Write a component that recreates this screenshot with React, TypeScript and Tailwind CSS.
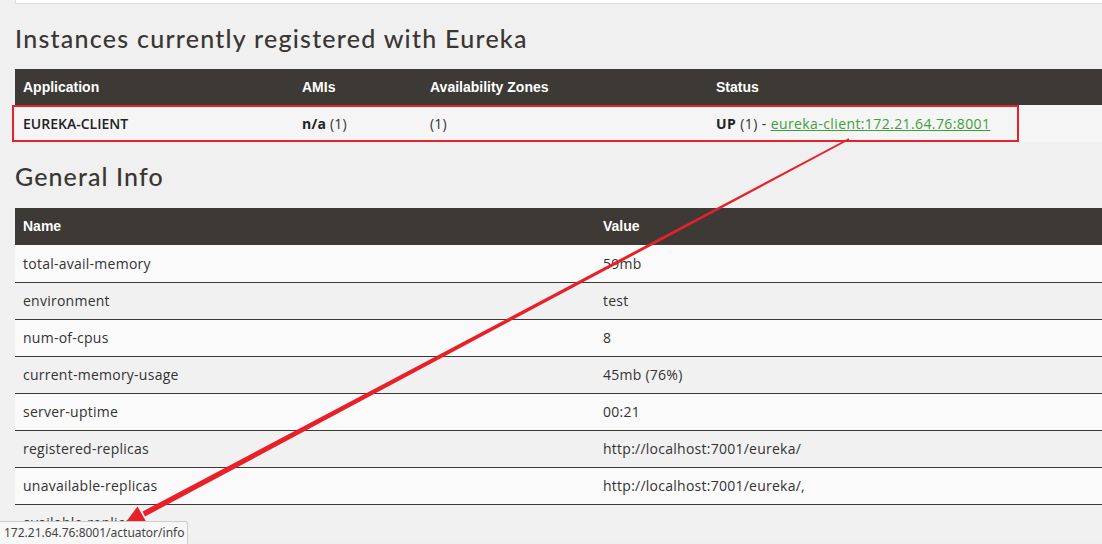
import React from "react";

const generalInfo: [string, string][] = [
  ["total-avail-memory", "59mb"],
  ["environment", "test"],
  ["num-of-cpus", "8"],
  ["current-memory-usage", "45mb (76%)"],
  ["server-uptime", "00:21"],
  ["registered-replicas", "http://localhost:7001/eureka/"],
  ["unavailable-replicas", "http://localhost:7001/eureka/,"],
  ["available-replicas", ""],
];

export default function App() {
  return (
    <div className="relative w-[1102px] h-[544px] overflow-hidden bg-[#f0f0f0] text-[#333333] [font-family:'Open_Sans',sans-serif]">
      <div className="pl-[15px] w-[1175px]">
        <div className="h-[4px] bg-white border-l border-b border-[#dddddd]" />

        <h1 className="mt-[17px] h-[34px] leading-[34px] text-[25px] font-medium text-[#3a3632] [font-family:'Lato',sans-serif] tracking-[1.25px]">
          Instances currently registered with Eureka
        </h1>

        <table className="mt-[14px] w-[1160px] table-fixed border-collapse text-[14px] tracking-[0.2px]">
          <colgroup>
            <col className="w-[279px]" />
            <col className="w-[128px]" />
            <col className="w-[286px]" />
            <col />
          </colgroup>
          <thead>
            <tr className="h-[36px] bg-[#3d3935] text-white text-left [font-family:'Liberation_Sans',sans-serif] font-bold tracking-normal">
              <th className="px-2 font-bold">Application</th>
              <th className="px-2 font-bold">AMIs</th>
              <th className="px-2 font-bold">Availability Zones</th>
              <th className="px-2 font-bold">Status</th>
            </tr>
          </thead>
          <tbody>
            <tr className="h-[37px] bg-[#f5f5f5]">
              <td className="px-2 font-semibold text-[#222] tracking-normal">EUREKA-CLIENT</td>
              <td className="px-2">
                <b className="font-bold text-[#222]">n/a</b> (1)
              </td>
              <td className="px-2">(1)</td>
              <td className="px-2 tracking-[0.4px]">
                <b className="font-bold text-[#222]">UP</b> (1) -{" "}
                <a className="text-[#3ca03c] underline">eureka-client:172.21.64.76:8001</a>
              </td>
            </tr>
          </tbody>
        </table>

        <h1 className="mt-[17px] h-[34px] leading-[34px] text-[25px] font-medium text-[#3a3632] [font-family:'Lato',sans-serif] tracking-[1.1px]">
          General Info
        </h1>

        <table className="mt-[15px] w-[1160px] table-fixed border-collapse text-[14px] tracking-[0.25px]">
          <colgroup>
            <col className="w-[580px]" />
            <col />
          </colgroup>
          <thead>
            <tr className="h-[37px] bg-[#3d3935] text-white text-left [font-family:'Liberation_Sans',sans-serif] tracking-normal">
              <th className="px-2 font-bold">Name</th>
              <th className="px-2 font-bold">Value</th>
            </tr>
          </thead>
          <tbody>
            {generalInfo.map(([k, v], i) => (
              <tr
                key={k}
                className={
                  (i % 2 === 0 ? "bg-[#fafafa] " : "bg-[#f1f1f1] ") +
                  (i === 0 ? "h-[37px]" : "h-[37px] border-t border-[#3d3935]")
                }
              >
                <td className="px-2">{k}</td>
                <td className="px-2">{v}</td>
              </tr>
            ))}
          </tbody>
        </table>
      </div>

      {/* annotation: red box */}
      <div className="absolute left-[12px] top-[105px] w-[1007px] h-[37px] border-2 border-[#e8202a]" />

      {/* annotation: arrow */}
      <svg className="absolute left-0 top-0 pointer-events-none" width="1102" height="544">
        <polygon points="849.4,139.8 848.6,138.2 142.6,511.5 145.0,516.5" fill="#e8202a" />
        <polygon points="123,526 137.5,506.5 147.5,524" fill="#e8202a" />
      </svg>

      {/* status bar */}
      <div className="absolute left-0 bottom-0 h-[23px] pl-[4px] pr-[3px] bg-[#f7f7f7] border-t border-r border-[#cccccc] rounded-tr-[3px] text-[12px] leading-[22px] text-[#444] [font-family:'Noto_Sans',sans-serif]">
        172.21.64.76:8001/actuator/info
      </div>
    </div>
  );
}
